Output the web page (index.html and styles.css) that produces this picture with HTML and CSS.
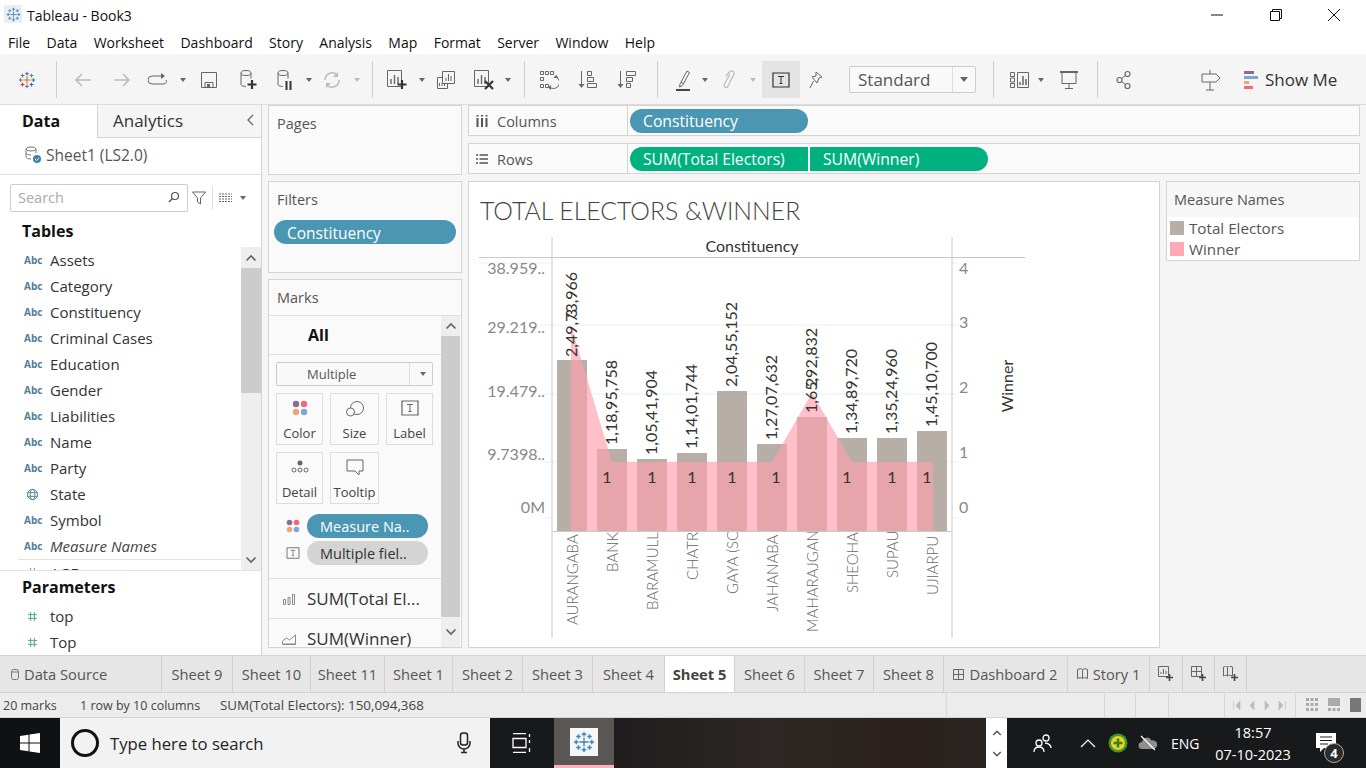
FILE: index.html
```html
<!DOCTYPE html>
<html lang="en">
<head>
    <meta charset="UTF-8">
    <meta name="viewport" content="width=device-width, initial-scale=1.0">
    <title>Tableau - Book3</title>
    <link rel="stylesheet" href="styles.css">
</head>
<body>
    <!-- shared icons -->
    <svg class="sprite" aria-hidden="true">
        <symbol id="i-logo" viewBox="0 0 24 24">
            <path d="M12 7v10M7 12h10M12 1v5M9.500 3.500h5M12 18v5M9.500 20.500h5M1 12h5M3.500 9.500v5M18 12h5M20.500 9.500v5M6 3.500v5M3.500 6h5M18 3.500v5M15.500 6h5M6 15.500v5M3.500 18h5M18 15.500v5M15.500 18h5" fill="none" stroke="currentColor" stroke-width="1.500"/>
        </symbol>
        <symbol id="i-dots" viewBox="0 0 16 16">
            <circle cx="4" cy="4" r="3.200" fill="#8a6d95"/>
            <circle cx="12" cy="4" r="3.200" fill="#ee6a7a"/>
            <circle cx="4" cy="12" r="3.200" fill="#f0a673"/>
            <circle cx="12" cy="12" r="3.200" fill="#7ea6d2"/>
        </symbol>
        <symbol id="i-t" viewBox="0 0 18 16">
            <path d="M1 1h16v14H1z" fill="none" stroke="currentColor" stroke-width="1.200"/>
            <path d="M6 4.500h6M9 4.500v7M7.500 11.500h3" fill="none" stroke="currentColor"/>
        </symbol>
        <symbol id="i-globe" viewBox="0 0 14 14">
            <circle cx="7" cy="7" r="5.500" fill="none" stroke="currentColor"/>
            <ellipse cx="7" cy="7" rx="2.500" ry="5.500" fill="none" stroke="currentColor"/>
            <path d="M1.500 5h11M1.500 9h11" fill="none" stroke="currentColor"/>
        </symbol>
        <symbol id="i-hash" viewBox="0 0 12 12">
            <path d="M4 1v10M8 1v10M1 4h10M1 8h10" fill="none" stroke="currentColor"/>
        </symbol>
        <symbol id="i-up" viewBox="0 0 12 8"><path d="M1.500 6.500L6 2l4.500 4.500" fill="none" stroke="currentColor" stroke-width="1.700"/></symbol>
        <symbol id="i-down" viewBox="0 0 12 8"><path d="M1.500 1.500L6 6l4.500-4.500" fill="none" stroke="currentColor" stroke-width="1.700"/></symbol>
    </svg>

    <header class="title-bar">
        <span class="app-icon"><svg width="15" height="15"><use href="#i-logo"/></svg></span>
        <span class="app-name">Tableau - Book3</span>
        <div class="win-controls">
            <svg width="14" height="14" viewBox="0 0 14 14"><path d="M1 7h12" stroke="#111" fill="none"/></svg>
            <svg width="14" height="14" viewBox="0 0 14 14"><path d="M1.500 3.500h9v9h-9zM3.500 3.500v-2h9v9h-2" stroke="#111" fill="none"/></svg>
            <svg width="14" height="14" viewBox="0 0 14 14"><path d="M1 1l12 12M13 1L1 13" stroke="#111" fill="none"/></svg>
        </div>
    </header>

    <nav class="menu-bar">
        <span>File</span><span>Data</span><span>Worksheet</span><span>Dashboard</span><span>Story</span><span>Analysis</span><span>Map</span><span>Format</span><span>Server</span><span>Window</span><span>Help</span>
    </nav>

    <div class="toolbar">
        <div class="tool"><svg width="18" height="18" viewBox="0 0 24 24" fill="none" stroke-width="1.600"><path d="M12 1v5M9.500 3.500h5M3.500 9.500v5M1 12h5M6 3.500v5M3.500 6h5" stroke="#5d7fa3"/><path d="M12 7v10M7 12h10" stroke="#e2732d"/><path d="M18 3.500v5M15.500 6h5" stroke="#3f9a9a"/><path d="M18 12h5M20.500 9.500v5" stroke="#3f78a8"/><path d="M6 15.500v5M3.500 18h5" stroke="#d8343f"/><path d="M18 15.500v5M15.500 18h5" stroke="#2f6ea5"/><path d="M12 18v5M9.500 20.500h5" stroke="#6d7f9a"/></svg></div>
        <div class="tool-sep"></div>
        <div class="tool off"><svg width="20" height="16" viewBox="0 0 20 16"><path d="M18 8H3M9 2L3 8l6 6" fill="none" stroke="currentColor" stroke-width="1.500"/></svg></div>
        <div class="tool off"><svg width="20" height="16" viewBox="0 0 20 16"><path d="M2 8h15M11 2l6 6-6 6" fill="none" stroke="currentColor" stroke-width="1.500"/></svg></div>
        <div class="tool"><svg width="20" height="14" viewBox="0 0 20 14"><path d="M13 3H4a3 3 0 0 0 0 8h12a2.500 2.500 0 0 0 2-4" fill="none" stroke="currentColor"/><path d="M13 0l4 3-4 3z" fill="currentColor"/></svg></div>
        <div class="tool caret"></div>
        <div class="tool"><svg width="16" height="18" viewBox="0 0 16 18"><path d="M.5 1.500h15v15H.5z" fill="none" stroke="currentColor"/><path d="M4 16.500v-5h8v5z" fill="none" stroke="currentColor"/><path d="M6 13h3v3H6z" fill="currentColor"/></svg></div>
        <div class="tool"><svg width="18" height="22" viewBox="0 0 18 22"><path d="M2 4.500v11a5 2 0 0 0 5 2M12 4.500v5" fill="none" stroke="currentColor"/><ellipse cx="7" cy="4" rx="5" ry="2.500" fill="none" stroke="currentColor"/><path d="M13 11v9M8.500 15.500h9" stroke="#333" stroke-width="2.200"/></svg></div>
        <div class="tool"><svg width="18" height="22" viewBox="0 0 18 22"><path d="M2 4.500v11a5 2 0 0 0 5 2M12 4.500v5" fill="none" stroke="currentColor"/><ellipse cx="7" cy="4" rx="5" ry="2.500" fill="none" stroke="currentColor"/><path d="M10.500 12v9M14.500 12v9" stroke="#333" stroke-width="2"/></svg></div>
        <div class="tool caret"></div>
        <div class="tool off"><svg width="18" height="18" viewBox="0 0 18 18"><path d="M2 9a7 7 0 0 1 12-5M16 9a7 7 0 0 1-12 5" fill="none" stroke="currentColor" stroke-width="1.500"/><path d="M15 1v5h-5zM3 17v-5h5z" fill="currentColor"/></svg></div>
        <div class="tool caret off"></div>
        <div class="tool-sep"></div>
        <div class="tool"><svg width="22" height="22" viewBox="0 0 22 22"><path d="M1.500 1.500h14v16h-14z" fill="none" stroke="currentColor"/><path d="M5 15V10M8.500 15V6M12 15V8" stroke="currentColor" stroke-width="1.400"/><path d="M16 11v9M11.500 15.500h9" stroke="#333" stroke-width="2.200"/></svg></div>
        <div class="tool caret"></div>
        <div class="tool"><svg width="20" height="20" viewBox="0 0 20 20"><path d="M6.500 1.500h12v12h-12zM6.500 7.500h-5v11h10v-5" fill="none" stroke="currentColor"/><path d="M10 11V8M12.500 11V4M15 11V6M3.500 16v-3M6 16v-3M8.500 16v-3" stroke="currentColor"/></svg></div>
        <div class="tool"><svg width="22" height="22" viewBox="0 0 22 22"><path d="M1.500 1.500h14v16h-14z" fill="none" stroke="currentColor"/><path d="M5 15V10M8.500 15V6M12 15V8" stroke="currentColor" stroke-width="1.400"/><path d="M12 12l8 8M20 12l-8 8" stroke="#333" stroke-width="2.200"/></svg></div>
        <div class="tool caret"></div>
        <div class="tool-sep"></div>
        <div class="tool"><svg width="20" height="20" viewBox="0 0 20 20"><path d="M1.500 1.500h3v3h-3zM6.500 1.500h3v3h-3zM11.500 1.500h3v3h-3zM1.500 7.500h3v3h-3zM1.500 14.500h3v3h-3zM6.500 14.500h3v3h-3z" fill="none" stroke="currentColor"/><path d="M17 7a6 6 0 0 1-5 11" fill="none" stroke="currentColor"/><path d="M12 15v5l-3-2.500zM17 5l2.500 3h-5z" fill="currentColor"/></svg></div>
        <div class="tool"><svg width="20" height="20" viewBox="0 0 20 20"><path d="M3.500 1v15" stroke="currentColor"/><path d="M.5 14l3 4 3-4z" fill="currentColor"/><path d="M9.500 1.500h4v4h-4zM9.500 7.500h6v4h-6zM9.500 13.500h9v4h-9z" fill="none" stroke="currentColor"/></svg></div>
        <div class="tool"><svg width="20" height="20" viewBox="0 0 20 20"><path d="M3.500 1v15" stroke="currentColor"/><path d="M.5 14l3 4 3-4z" fill="currentColor"/><path d="M9.500 1.500h9v4h-9zM9.500 7.500h6v4h-6zM9.500 13.500h4v4h-4z" fill="none" stroke="currentColor"/></svg></div>
        <div class="tool-sep"></div>
        <div class="tool"><svg width="16" height="22" viewBox="0 0 16 22"><path d="M5 15L12 2l2.500 1.500L7.500 16.500 4.500 18zM6 13l3 2" fill="none" stroke="currentColor"/><path d="M1 21h14" stroke="#444" stroke-width="2"/></svg></div>
        <div class="tool caret"></div>
        <div class="tool off"><svg width="14" height="22" viewBox="0 0 14 22"><path d="M4 7L8 2.500a2.500 2.500 0 0 1 4 2.500L6 17a2 2 0 0 1-4-1L8 5" fill="none" stroke="currentColor" stroke-width="1.200"/></svg></div>
        <div class="tool caret off"></div>
        <div class="tool active"><svg width="18" height="16"><use href="#i-t"/></svg></div>
        <div class="tool"><svg width="16" height="20" viewBox="0 0 16 20"><path d="M7 2l6 5-3 1-2 5-5-6 4-1zM4.500 11L1 18" fill="none" stroke="currentColor"/></svg></div>
        <div class="fit-select"><span>Standard</span><i class="fit-divider"></i><i class="caret"></i></div>
        <div class="tool-sep"></div>
        <div class="tool"><svg width="20" height="18" viewBox="0 0 20 18"><path d="M.5 1.500h4v4h-4zM.5 7h4v4h-4zM.5 12.500h4v4h-4zM7.500 1.500h11v15h-11z" fill="none" stroke="currentColor"/><path d="M10 14v-3M13 14V5M16 14V8" stroke="currentColor" stroke-width="1.500"/></svg></div>
        <div class="tool caret"></div>
        <div class="tool"><svg width="18" height="20" viewBox="0 0 18 20"><path d="M0 2h18" stroke="currentColor" stroke-width="2"/><path d="M2 2.500v11h14v-11M9 13.500v5M5 18.500h8" fill="none" stroke="currentColor"/></svg></div>
        <div class="tool-sep"></div>
        <div class="tool"><svg width="16" height="20" viewBox="0 0 16 20"><circle cx="11.500" cy="4" r="2.500" fill="none" stroke="currentColor" stroke-width="1.200"/><circle cx="3.500" cy="10" r="2.500" fill="none" stroke="currentColor" stroke-width="1.200"/><circle cx="11.500" cy="16" r="2.500" fill="none" stroke="currentColor" stroke-width="1.200"/><path d="M5.500 8.500l4-3M5.500 11.500l4 3" stroke="currentColor"/></svg></div>
        <div class="tool sign"><svg width="20" height="22" viewBox="0 0 20 22"><path d="M1 5h14l4 4-4 4H1zM9 1v4M9 13v8M5 21h8" fill="none" stroke="currentColor"/></svg></div>
        <div class="show-me">
            <svg width="14" height="20" viewBox="0 0 14 20"><path d="M0 1h10v3H0z" fill="#8a6d95"/><path d="M0 6h14v3H0z" fill="#7ea6d2"/><path d="M0 11h5v3H0z" fill="#f0a673"/><path d="M0 16h9v3H0z" fill="#ee6a7a"/></svg>
            <span>Show Me</span>
        </div>
    </div>

    <main class="workspace">
        <!-- data pane -->
        <aside class="data-pane">
            <div class="pane-tabs">
                <div class="pane-tab current">Data</div>
                <div class="pane-tab">Analytics<svg class="collapse" width="8" height="12" viewBox="0 0 8 12"><path d="M7 1L2 6l5 5" fill="none" stroke="#666" stroke-width="1.300"/></svg></div>
            </div>
            <div class="source-row">
                <svg width="18" height="18" viewBox="0 0 18 18"><ellipse cx="7" cy="3" rx="5" ry="2" fill="none" stroke="#777"/><path d="M2 3v8c0 1 2 2 5 2M12 3v4M2 7c0 1 2 2 5 2" fill="none" stroke="#777"/><circle cx="13" cy="13" r="4" fill="#3f85a8"/><path d="M11 13l1.500 1.500L15 12" fill="none" stroke="#fff"/></svg>
                <span>Sheet1 (LS2.0)</span>
            </div>
            <div class="search-row">
                <div class="search-box">
                    <span>Search</span>
                    <svg width="12" height="12" viewBox="0 0 12 12"><circle cx="7" cy="5" r="3.500" fill="none" stroke="#555" stroke-width="1.200"/><path d="M4.500 7.500L1 11" stroke="#555" stroke-width="1.400"/></svg>
                </div>
                <svg class="funnel" width="14" height="14" viewBox="0 0 14 14"><path d="M.5 1h13L8.500 7v6l-3-2V7z" fill="none" stroke="#666"/></svg>
                <i class="v-line"></i>
                <svg class="list-view" width="13" height="10" viewBox="0 0 13 10"><path d="M0 1h13M0 3.500h13M0 6h13M0 8.500h13" stroke="#666" stroke-dasharray="2 1"/></svg>
                <i class="caret"></i>
            </div>
            <h2 class="group-title">Tables</h2>
            <div class="fields-wrap">
                <ul class="fields">
                    <li><b>Abc</b>Assets</li>
                    <li><b>Abc</b>Category</li>
                    <li><b>Abc</b>Constituency</li>
                    <li><b>Abc</b>Criminal Cases</li>
                    <li><b>Abc</b>Education</li>
                    <li><b>Abc</b>Gender</li>
                    <li><b>Abc</b>Liabilities</li>
                    <li><b>Abc</b>Name</li>
                    <li><b>Abc</b>Party</li>
                    <li><b class="glyph"><svg width="13" height="13"><use href="#i-globe"/></svg></b>State</li>
                    <li><b>Abc</b>Symbol</li>
                    <li class="calc"><b>Abc</b><em>Measure Names</em></li>
                    <li class="measure"><b class="glyph green"><svg width="11" height="11"><use href="#i-hash"/></svg></b>AGE</li>
                </ul>
                <div class="scroll">
                    <div class="scroll-btn"><svg width="12" height="8"><use href="#i-up"/></svg></div>
                    <div class="scroll-track"><div class="scroll-thumb data-thumb"></div></div>
                    <div class="scroll-btn"><svg width="12" height="8"><use href="#i-down"/></svg></div>
                </div>
            </div>
            <div class="params">
                <h2 class="group-title">Parameters</h2>
                <ul class="fields">
                    <li><b class="glyph green"><svg width="11" height="11"><use href="#i-hash"/></svg></b>top</li>
                    <li><b class="glyph green"><svg width="11" height="11"><use href="#i-hash"/></svg></b>Top</li>
                </ul>
            </div>
        </aside>

        <!-- pages, filters, marks -->
        <section class="cards-col">
            <div class="card pages-card"><div class="card-title">Pages</div></div>
            <div class="card filters-card">
                <div class="card-title">Filters</div>
                <div class="pill blue filter-pill">Constituency</div>
            </div>
            <div class="card marks-card">
                <div class="card-title marks-title">Marks</div>
                <div class="marks-wrap">
                    <div class="marks-body">
                        <div class="marks-all">All</div>
                        <div class="marks-main">
                            <div class="mark-select"><span>Multiple</span><i class="caret"></i></div>
                            <div class="mark-grid">
                                <div class="mark-btn"><svg width="16" height="16"><use href="#i-dots"/></svg><span>Color</span></div>
                                <div class="mark-btn"><svg width="20" height="18" viewBox="0 0 20 18"><circle cx="12" cy="8" r="6.500" fill="none" stroke="#666"/><circle cx="5.500" cy="12" r="4" fill="#fafafa" stroke="#666"/></svg><span>Size</span></div>
                                <div class="mark-btn"><svg class="t-icon" width="18" height="16"><use href="#i-t"/></svg><span>Label</span></div>
                                <div class="mark-btn"><svg width="20" height="16" viewBox="0 0 20 16"><circle cx="10" cy="4" r="2.500" fill="#666"/><circle cx="4" cy="11" r="2" fill="none" stroke="#666"/><circle cx="10" cy="11" r="2" fill="none" stroke="#666"/><circle cx="16" cy="11" r="2" fill="none" stroke="#666"/></svg><span>Detail</span></div>
                                <div class="mark-btn"><svg width="18" height="17" viewBox="0 0 18 17"><path d="M1 1h16v11h-4v4l-4-4H1z" fill="none" stroke="#666"/></svg><span>Tooltip</span></div>
                            </div>
                            <div class="mark-pill"><svg width="14" height="14"><use href="#i-dots"/></svg><div class="pill blue">Measure Na..</div></div>
                            <div class="mark-pill"><svg class="t-icon" width="14" height="12"><use href="#i-t"/></svg><div class="pill grey">Multiple fiel..</div></div>
                        </div>
                        <div class="marks-row"><svg width="14" height="12" viewBox="0 0 14 12"><path d="M1.500 6.500h2v5h-2zM6 4.500h2v7H6zM10.500 1.500h2v10h-2z" fill="none" stroke="#888"/></svg>SUM(Total El...</div>
                        <div class="marks-row"><svg width="14" height="12" viewBox="0 0 14 12"><path d="M.5 11.500h13M.5 11V8l4-3 3 2 6-5v9z" fill="none" stroke="#888"/></svg>SUM(Winner)</div>
                    </div>
                    <div class="scroll">
                        <div class="scroll-btn"><svg width="12" height="8"><use href="#i-up"/></svg></div>
                        <div class="scroll-track"><div class="scroll-thumb marks-thumb"></div></div>
                        <div class="scroll-btn tall"><svg width="12" height="8"><use href="#i-down"/></svg></div>
                    </div>
                </div>
            </div>
        </section>

        <!-- shelves and view -->
        <section class="view-col">
            <div class="shelf">
                <div class="shelf-label"><svg width="12" height="12" viewBox="0 0 12 12"><path d="M1.500 3v9M6 3v9M10.500 3v9" stroke="#555" stroke-width="2"/><path d="M1.500 0v1.500M6 0v1.500M10.500 0v1.500" stroke="#555" stroke-width="2"/></svg>Columns</div>
                <div class="shelf-pills"><div class="pill blue shelf-pill">Constituency</div></div>
            </div>
            <div class="shelf">
                <div class="shelf-label"><svg width="12" height="12" viewBox="0 0 12 12"><path d="M0 2h2M3.500 2H12M0 6h2M3.500 6H12M0 10h2M3.500 10H12" stroke="#555" stroke-width="1.500"/></svg>Rows</div>
                <div class="shelf-pills">
                    <div class="pill green shelf-pill left">SUM(Total Electors)</div>
                    <div class="pill green shelf-pill right">SUM(Winner)</div>
                </div>
            </div>
            <div class="view-row">
                <div class="viz-card">
                    <h1 class="viz-title">TOTAL ELECTORS &amp;WINNER</h1>
                    <svg class="chart" width="690" height="416" viewBox="469 232 690 416">
                        <defs><clipPath id="xclip"><rect x="552" y="532" width="400" height="110"/></clipPath></defs>
                        <g class="grid">
                            <path d="M479 263h73M552 325h400M552 394h400M552 462h400M952 263h6M952 325h6M952 394h6M952 462h6M545 518h7M952 518h6M540 325h12M540 394h12M540 462h12"/>
                        </g>
                        <path class="rule" d="M552 237v401M952 237v401M479 257.500h546M552 531.500h400"/>
                        <g class="bars">
                            <rect x="557" y="360" width="30" height="171"/>
                            <rect x="597" y="449" width="30" height="82"/>
                            <rect x="637" y="459" width="30" height="72"/>
                            <rect x="677" y="453" width="30" height="78"/>
                            <rect x="717" y="391" width="30" height="140"/>
                            <rect x="757" y="444" width="30" height="87"/>
                            <rect x="797" y="417" width="30" height="114"/>
                            <rect x="837" y="438" width="30" height="93"/>
                            <rect x="877" y="438" width="30" height="93"/>
                            <rect x="917" y="431" width="30" height="100"/>
                        </g>
                        <path class="area" d="M571 531V325L612 462H772L812 393L852 462H933V531Z"/>
                        <g class="value-labels">
                            <text transform="translate(577 357) rotate(-90)">2,49,73,966</text>
                            <text transform="translate(617 445) rotate(-90)">1,18,95,758</text>
                            <text transform="translate(657 455) rotate(-90)">1,05,41,904</text>
                            <text transform="translate(697 449) rotate(-90)">1,14,01,744</text>
                            <text transform="translate(737 387) rotate(-90)">2,04,55,152</text>
                            <text transform="translate(777 440) rotate(-90)">1,27,07,632</text>
                            <text transform="translate(817 413) rotate(-90)">1,65,92,832</text>
                            <text transform="translate(857 434) rotate(-90)">1,34,89,720</text>
                            <text transform="translate(897 434) rotate(-90)">1,35,24,960</text>
                            <text transform="translate(937 427) rotate(-90)">1,45,10,700</text>
                            <text transform="translate(577 318) rotate(-90)">3</text>
                            <text transform="translate(817 387) rotate(-90)">2</text>
                        </g>
                        <g class="winner-labels">
                            <text x="607" y="483">1</text>
                            <text x="652" y="483">1</text>
                            <text x="692" y="483">1</text>
                            <text x="732" y="483">1</text>
                            <text x="776" y="483">1</text>
                            <text x="847" y="483">1</text>
                            <text x="892" y="483">1</text>
                            <text x="927" y="483">1</text>
                        </g>
                        <g class="x-labels" clip-path="url(#xclip)">
                            <text transform="translate(578 625) rotate(-90)">AURANGABA</text>
                            <text transform="translate(618 572) rotate(-90)">BANK</text>
                            <text transform="translate(658 610) rotate(-90)">BARAMULL</text>
                            <text transform="translate(698 580) rotate(-90)">CHATR</text>
                            <text transform="translate(738 594) rotate(-90)">GAYA (SC</text>
                            <text transform="translate(778 612) rotate(-90)">JAHANABA</text>
                            <text transform="translate(818 632) rotate(-90)">MAHARAJGAN</text>
                            <text transform="translate(858 593) rotate(-90)">SHEOHA</text>
                            <text transform="translate(898 578) rotate(-90)">SUPAU</text>
                            <text transform="translate(938 595) rotate(-90)">UJIARPU</text>
                        </g>
                        <g class="axis-left">
                            <text x="545" y="274">38.959..</text>
                            <text x="545" y="333">29.219..</text>
                            <text x="545" y="397">19.479..</text>
                            <text x="545" y="460">9.7398..</text>
                            <text x="545" y="513">0M</text>
                        </g>
                        <g class="axis-right">
                            <text x="959" y="274">4</text>
                            <text x="959" y="328">3</text>
                            <text x="959" y="393">2</text>
                            <text x="959" y="458">1</text>
                            <text x="959" y="513">0</text>
                        </g>
                        <text class="axis-title" x="752" y="252">Constituency</text>
                        <text class="axis-title" transform="translate(1013 386) rotate(-90)">Winner</text>
                    </svg>
                </div>
                <aside class="legend">
                    <div class="legend-head">Measure Names</div>
                    <div class="legend-row"><i class="swatch taupe"></i>Total Electors</div>
                    <div class="legend-row"><i class="swatch pink"></i>Winner</div>
                </aside>
            </div>
        </section>
    </main>

    <div class="sheet-tabs">
        <div class="tab"><svg width="8" height="11" viewBox="0 0 8 11"><rect x=".5" y=".5" width="7" height="10" rx="2" fill="none" stroke="#777"/><path d="M.5 3h7" stroke="#777"/></svg>Data Source</div>
        <div class="tab">Sheet 9</div>
        <div class="tab">Sheet 10</div>
        <div class="tab">Sheet 11</div>
        <div class="tab">Sheet 1</div>
        <div class="tab">Sheet 2</div>
        <div class="tab">Sheet 3</div>
        <div class="tab">Sheet 4</div>
        <div class="tab current">Sheet 5</div>
        <div class="tab">Sheet 6</div>
        <div class="tab">Sheet 7</div>
        <div class="tab">Sheet 8</div>
        <div class="tab"><svg width="11" height="11" viewBox="0 0 11 11"><path d="M.5.500h10v10H.5zM5.500.500v10M.5 5.500h10" fill="none" stroke="#666"/></svg>Dashboard 2</div>
        <div class="tab"><svg width="11" height="12" viewBox="0 0 11 12"><path d="M.5 1.500c2-1 4-1 5 0 1-1 3-1 5 0v9c-2-1-4-1-5 0-1-1-3-1-5 0zM5.500 1.500v9" fill="none" stroke="#666"/></svg>Story 1</div>
        <div class="tab"><svg width="16" height="16" viewBox="0 0 16 16"><path d="M.5.500h10v10H.5z" fill="none" stroke="#666"/><path d="M3 8V6M5.500 8V3M8 8V5" stroke="#666"/><path d="M11.500 8v7M8 11.500h7" stroke="#444" stroke-width="1.600"/></svg></div>
        <div class="tab"><svg width="16" height="16" viewBox="0 0 16 16"><path d="M.5.500h10v10H.5zM5.500.500v10M.5 5.500h10" fill="none" stroke="#666"/><path d="M11.500 8v7M8 11.500h7" stroke="#444" stroke-width="1.600"/></svg></div>
        <div class="tab"><svg width="16" height="16" viewBox="0 0 16 16"><path d="M.5 1c1.500-1 3-1 4 0 1-1 3-1 5 0v9c-2-1-4-1-5 0-1-1-2.500-1-4 0zM4.500 1v9" fill="none" stroke="#666"/><path d="M11.500 8v7M8 11.500h7" stroke="#444" stroke-width="1.600"/></svg></div>
    </div>

    <footer class="status-bar">
        <span class="status-cell first">20 marks</span>
        <span class="status-cell second">1 row by 10 columns</span>
        <span class="status-cell third">SUM(Total Electors): 150,094,368</span>
        <span class="status-cell"></span>
        <span class="status-cell"></span>
        <span class="status-cell"></span>
        <span class="status-cell"></span>
        <span class="status-cell pager">
            <svg width="54" height="9" viewBox="0 0 54 9"><path d="M.5 0v9M7 0L3 4.500 7 9zM21 0l-4 4.500L21 9zM32 0l4 4.500L32 9zM46 0l4 4.500L46 9zM52.500 0v9" fill="#bbb" stroke="#bbb" stroke-width=".6"/></svg>
        </span>
        <span class="status-cell views">
            <svg width="12" height="14" viewBox="0 0 12 14"><path d="M0 0h3v3H0zM4.500 0h3v3h-3zM9 0h3v3H9zM0 5h3v3H0zM4.500 5h3v3h-3zM9 5h3v3H9zM0 10h3v3H0zM4.500 10h3v3h-3zM9 10h3v3H9z" fill="#aaa"/></svg>
            <svg width="12" height="14" viewBox="0 0 12 14"><path d="M0 0h12v8H0zM0 10h3v3H0zM4.500 10h3v3h-3zM9 10h3v3H9z" fill="#aaa"/></svg>
            <svg width="11" height="14" viewBox="0 0 11 14"><path d="M0 0h11v14H0z" fill="#777"/></svg>
        </span>
    </footer>

    <div class="taskbar">
        <div class="start"><svg width="20" height="20" viewBox="0 0 20 20"><path d="M0 3l8.500-1.200v7.700H0zM9.500 1.600L20 0v9.500H9.500zM0 10.500h8.500v7.700L0 17zM9.500 10.500H20V20L9.500 18.400z" fill="#fff"/></svg></div>
        <div class="task-search">
            <i class="cortana"></i>
            <span>Type here to search</span>
            <svg class="mic" width="14" height="22" viewBox="0 0 14 22"><rect x="3.500" y="1" width="7" height="12" rx="2.500" fill="none" stroke="#222" stroke-width="1.500"/><path d="M1 9v2a6 6 0 0 0 12 0V9M7 17v3M4 20.500h6" fill="none" stroke="#222" stroke-width="1.500"/></svg>
        </div>
        <div class="task-view"><svg width="20" height="20" viewBox="0 0 20 20"><path d="M1 .5h13M1 19.500h13M1 5.500h13v9H1zM17.500 1v3M17.500 7v3M17.500 15v4" fill="none" stroke="#fff" stroke-width="1.300"/></svg></div>
        <div class="task-app"><span class="task-app-icon"><svg width="22" height="22"><use href="#i-logo"/></svg></span></div>
        <div class="task-wallpaper"></div>
        <div class="task-scroll">
            <svg width="10" height="8"><use href="#i-up"/></svg>
            <svg width="10" height="8"><use href="#i-down"/></svg>
        </div>
        <div class="tray">
            <svg class="people" width="20" height="20" viewBox="0 0 20 20"><circle cx="13" cy="5" r="3" fill="none" stroke="#fff" stroke-width="1.300"/><circle cx="6" cy="10" r="3" fill="none" stroke="#fff" stroke-width="1.300"/><path d="M1 19c0-3 2-5 5-5s5 2 5 5M12 10c3 0 6 2 6 5" fill="none" stroke="#fff" stroke-width="1.300"/></svg>
            <svg class="tray-up" width="16" height="10" viewBox="0 0 16 10"><path d="M1 9l7-7 7 7" fill="none" stroke="#fff" stroke-width="1.200"/></svg>
            <svg class="tray-green" width="20" height="20" viewBox="0 0 20 20"><circle cx="10" cy="10" r="9.500" fill="#3b9a2c"/><circle cx="10" cy="10" r="7" fill="#f4cf1f"/><path d="M10 5.500v9M5.500 10h9" stroke="#2c8a25" stroke-width="2.600"/></svg>
            <svg class="tray-cloud" width="20" height="16" viewBox="0 0 20 16"><path d="M4 14a3.500 3.500 0 0 1 0-7 5 5 0 0 1 9.500-1.500A4 4 0 0 1 16 14z" fill="#8e8e8e"/><path d="M3 1l14 14" stroke="#fff" stroke-width="1.200"/></svg>
            <span class="lang">ENG</span>
            <div class="clock"><span>18:57</span><span>07-10-2023</span></div>
            <div class="notify">
                <svg width="22" height="20" viewBox="0 0 22 20"><path d="M1 0h20v15H9l-4 4v-4H1z" fill="#fff"/><path d="M5 4h12M5 7.500h12M5 11h8" stroke="#222" stroke-width="1.200"/></svg>
                <span class="badge">4</span>
            </div>
        </div>
    </div>
</body>
</html>
```

FILE: styles.css
```css
* {
    box-sizing: border-box;
}
html, body {
    margin: 0;
    padding: 0;
}
body {
    width: 1366px;
    height: 768px;
    overflow: hidden;
    font-family: "Open Sans", "Liberation Sans", sans-serif;
    font-size: 14.500px;
    color: #333;
    background-color: #f5f5f5;
}
.sprite {
    display: none;
}
ul {
    list-style: none;
    margin: 0;
    padding: 0;
}
h1, h2 {
    margin: 0;
}
svg {
    display: block;
    flex: none;
}
.caret {
    display: block;
    width: 0;
    height: 0;
    border-left: 4px solid transparent;
    border-right: 4px solid transparent;
    border-top: 5px solid #666;
}

/* title and menu */
.title-bar {
    height: 30px;
    background-color: #fff;
    display: flex;
    align-items: center;
    padding-left: 4px;
    font-size: 14px;
    color: #111;
}
.app-icon {
    width: 18px;
    height: 18px;
    margin-top: -2px;
    background-color: #e9eef2;
    color: #4b8dbd;
    display: flex;
    align-items: center;
    justify-content: center;
    margin-right: 5px;
}
.win-controls {
    margin-left: auto;
    display: flex;
    gap: 44.500px;
    padding-right: 25px;
}
.menu-bar {
    height: 24px;
    background-color: #fff;
    display: flex;
    align-items: center;
    gap: 16.400px;
    padding-left: 8px;
    font-size: 14px;
    color: #111;
}

/* toolbar */
.toolbar {
    height: 51px;
    padding: 7px 0 7px 8px;
    display: grid;
    grid-template-columns: 38px 20px 34px 44px 28px 22px 30px 48px 26px 22px 24px 26px 4px 46px 4px 44px 32px 16px 16px 34px 44px 34px 26px 26px 18px 30px 18px 38px 34px 142px 34px 20px 22px 34px 22px 32px 86px auto;
    align-items: stretch;
    justify-items: center;
    border-bottom: 1px solid #dcdcdc;
}
.tool {
    display: flex;
    align-items: center;
    justify-content: center;
    color: #666;
    min-width: 0;
}
.tool.caret {
    width: 8px;
    height: 37px;
    border: none;
}
.tool.caret::after {
    content: "";
    border-left: 3px solid transparent;
    border-right: 3px solid transparent;
    border-top: 4px solid #666;
}
.tool.off {
    color: #bbb;
}
.tool.caret.off::after {
    border-top-color: #bbb;
}
.tool.active {
    width: 100%;
    background-color: #e4e4e4;
    color: #333;
}
.tool-sep {
    width: 1px;
    background-color: #cfcfcf;
}
.tool.sign {
    justify-self: end;
    width: 30px;
}
.fit-select {
    justify-self: end;
    width: 127px;
    height: 27px;
    align-self: center;
    background-color: #f9f9f9;
    border: 1px solid #ccc;
    border-radius: 2px;
    display: flex;
    align-items: center;
    padding: 0 7px 0 8px;
    font-size: 17px;
    color: #555;
}
.fit-divider {
    width: 1px;
    height: 25px;
    background-color: #ddd;
    margin-left: auto;
    margin-right: 7px;
}
.show-me {
    justify-self: start;
    margin-left: 18px;
    display: flex;
    align-items: center;
    gap: 7px;
    font-size: 17px;
    color: #333;
}

/* main area */
.workspace {
    height: 550px;
    display: grid;
    grid-template-columns: 262px 194px 892px;
    gap: 6px;
}
.data-pane {
    background-color: #fff;
    border-right: 1px solid #d4d4d4;
    border-bottom: 1px solid #d4d4d4;
    display: flex;
    flex-direction: column;
}
.pane-tabs {
    height: 33px;
    display: grid;
    grid-template-columns: 97px 1fr;
}
.pane-tab {
    position: relative;
    background-color: #f5f5f5;
    border-left: 1px solid #d4d4d4;
    border-bottom: 1px solid #d4d4d4;
    padding: 4px 0 0 15px;
    font-size: 17px;
    color: #333;
}
.pane-tab.current {
    background-color: #fff;
    border: none;
    padding: 5px 0 0 22px;
    font-weight: 700;
    font-size: 16px;
    color: #111;
}
.collapse {
    position: absolute;
    right: 7px;
    top: 9px;
}
.source-row {
    height: 37px;
    padding: 0 0 2px 24px;
    border-bottom: 1px solid #e0e0e0;
    display: flex;
    align-items: center;
    gap: 4px;
    font-size: 15.500px;
    color: #555;
}
.search-row {
    height: 46px;
    padding: 0 0 0 10px;
    display: flex;
    align-items: center;
}
.search-box {
    width: 178px;
    height: 28px;
    border: 1px solid #ccc;
    border-radius: 2px;
    display: flex;
    align-items: center;
    justify-content: space-between;
    padding: 0 7px 2px;
    color: #aaa;
}
.funnel {
    margin-left: 4px;
}
.v-line {
    width: 1px;
    height: 22px;
    background-color: #ddd;
    margin: 0 6px;
}
.list-view {
    margin-right: 8px;
}
.search-row .caret {
    border-left-width: 3.500px;
    border-right-width: 3.500px;
    border-top-width: 4px;
}
.group-title {
    height: 26px;
    padding: 0 0 0 22px;
    font-size: 16px;
    font-weight: 700;
    color: #111;
    line-height: 20px;
}
.fields-wrap {
    height: 324px;
    display: flex;
    border-bottom: 1px solid #e2e2e2;
}
.fields-wrap .fields {
    flex: 1;
    overflow: hidden;
}
.fields li {
    height: 26px;
    display: flex;
    align-items: center;
    padding-left: 24px;
    font-size: 15px;
    color: #333;
}
.fields b {
    width: 26px;
    flex: none;
    font-size: 10px;
    font-weight: 700;
    color: #4f7f95;
}
.fields em {
    color: #444;
}
.fields .glyph {
    padding-left: 2px;
}
.fields .green {
    color: #3fa07f;
    padding-left: 3px;
}
.fields .measure {
    border-top: 1px solid #e2e2e2;
    margin-left: 18px;
    padding-left: 6px;
}
.params {
    padding-top: 6px;
}
.params .group-title {
    height: 22px;
    margin-bottom: 4px;
}
.scroll {
    width: 20px;
    flex: none;
    background-color: #eee;
    display: flex;
    flex-direction: column;
    color: #666;
}
.scroll-btn {
    height: 21px;
    display: flex;
    align-items: center;
    justify-content: center;
}
.scroll-btn.tall {
    height: 31px;
}
.scroll-track {
    flex: 1;
}
.scroll-thumb {
    background-color: #ccc;
}
.data-thumb {
    height: 125px;
}
.marks-thumb {
    height: 281px;
}

/* cards */
.cards-col {
    display: flex;
    flex-direction: column;
    gap: 6px;
}
.card {
    background-color: #fafafa;
    border: 1px solid #d4d4d4;
}
.card-title {
    padding: 8px 0 0 8px;
    color: #555;
}
.pages-card {
    height: 70px;
}
.filters-card {
    height: 92px;
}
.marks-card {
    height: 369px;
    display: flex;
    flex-direction: column;
}
.marks-title {
    height: 36px;
    padding-top: 8px;
    border-bottom: 1px solid #e0e0e0;
}
.marks-wrap {
    flex: 1;
    min-height: 0;
    display: flex;
}
.marks-body {
    flex: 1;
    min-width: 0;
    overflow: hidden;
}
.marks-wrap .scroll {
    width: 19px;
    margin-right: 1px;
}
.marks-all {
    height: 39px;
    border-bottom: 1px solid #e0e0e0;
    padding: 0 0 0 39px;
    display: flex;
    align-items: center;
    font-size: 16px;
    font-weight: 700;
    color: #111;
}
.marks-main {
    height: 224px;
    padding: 7px 0 0 7px;
    border-bottom: 1px solid #e0e0e0;
}
.mark-select {
    width: 157px;
    height: 24px;
    border: 1px solid #ccc;
    border-radius: 2px;
    background-color: #f9f9f9;
    display: flex;
    align-items: center;
    padding-left: 30px;
    font-size: 13px;
    color: #555;
    position: relative;
}
.mark-select .caret {
    position: absolute;
    right: 6px;
    border-left-width: 3.500px;
    border-right-width: 3.500px;
    border-top-width: 4px;
}
.mark-select::after {
    content: "";
    position: absolute;
    right: 22px;
    top: 0;
    bottom: 0;
    width: 1px;
    background-color: #ddd;
}
.mark-grid {
    display: grid;
    grid-template-columns: 47px 49px 47px;
    grid-auto-rows: 52px;
    gap: 7px;
    margin-top: 7px;
}
.mark-btn {
    border: 1px solid #ddd;
    display: flex;
    flex-direction: column;
    align-items: center;
    justify-content: space-between;
    padding: 6px 0 2px;
    font-size: 13px;
    color: #444;
}
.t-icon {
    color: #666;
}
.mark-pill {
    display: flex;
    align-items: center;
    margin-top: 3px;
}
.mark-pill svg {
    margin-left: 10px;
    margin-right: 7px;
}
.mark-grid + .mark-pill {
    margin-top: 10px;
}
.mark-pill .pill {
    width: 121px;
    padding-left: 13px;
}
.marks-row {
    height: 40px;
    display: flex;
    align-items: center;
    gap: 11px;
    padding-left: 13px;
    border-bottom: 1px solid #e0e0e0;
    font-size: 17px;
    color: #333;
}
.pill {
    height: 24px;
    border-radius: 12px;
    display: flex;
    align-items: center;
    padding-top: 1px;
    white-space: nowrap;
}
.pill.blue {
    background-color: #4a96b3;
    color: #fff;
}
.pill.green {
    background-color: #00b180;
    color: #fff;
}
.pill.grey {
    background-color: #d4d4d4;
    color: #333;
}
.filter-pill {
    margin: 11px 0 0 5px;
    width: 182px;
    padding-left: 13px;
    font-size: 15.500px;
}

/* shelves */
.view-col {
    display: flex;
    flex-direction: column;
    gap: 7px;
}
.shelf {
    height: 31px;
    background-color: #fafafa;
    border: 1px solid #d4d4d4;
    display: grid;
    grid-template-columns: 159px 1fr;
}
.shelf-label {
    border-right: 1px solid #d4d4d4;
    display: flex;
    align-items: center;
    gap: 9px;
    padding: 1px 0 0 7px;
    color: #555;
}
.shelf-pills {
    display: flex;
    align-items: center;
    gap: 2px;
    padding-left: 2px;
}
.shelf-pill {
    width: 178px;
    padding-left: 13px;
    font-size: 15.700px;
}
.shelf-pill.left {
    border-radius: 12px 0 0 12px;
}
.shelf-pill.right {
    border-radius: 0 12px 12px 0;
}
.view-row {
    display: grid;
    grid-template-columns: 692px 194px;
    gap: 6px;
    align-items: start;
}
.viz-card {
    height: 467px;
    background-color: #fff;
    border: 1px solid #d4d4d4;
}
.viz-title {
    height: 50px;
    padding: 13px 0 0 11px;
    font-family: "Lato", "Liberation Sans", sans-serif;
    font-size: 24.800px;
    font-weight: 300;
    color: #444;
    line-height: 32px;
}

/* chart */
.chart text {
    font-family: "Lato", "Liberation Sans", sans-serif;
}
.grid path {
    stroke: #eeeeee;
    fill: none;
}
.rule {
    stroke: #c8c8c8;
    fill: none;
}
.bars rect {
    fill: #b8aea8;
}
.area {
    fill: #ff9eac;
    fill-opacity: 0.65;
}
.value-labels text {
    font-size: 16px;
    fill: #333;
}
.winner-labels text {
    font-size: 16px;
    fill: #333;
    text-anchor: middle;
}
.x-labels text {
    font-size: 15px;
    font-weight: 300;
    fill: #666;
}
.axis-left text {
    font-size: 16px;
    fill: #888;
    text-anchor: end;
}
.axis-right text {
    font-size: 16px;
    fill: #888;
}
.axis-title {
    font-size: 16px;
    fill: #333;
    text-anchor: middle;
}

/* legend */
.legend {
    height: 80px;
    background-color: #fff;
    border: 1px solid #d4d4d4;
}
.legend-head {
    height: 35px;
    background-color: #f7f7f7;
    padding: 8px 0 0 7px;
    color: #555;
}
.legend-row {
    height: 21px;
    display: flex;
    align-items: center;
    gap: 5px;
    padding-left: 3px;
    font-size: 15.200px;
    color: #555;
}
.swatch {
    width: 14px;
    height: 14px;
}
.swatch.taupe {
    background-color: #b8aea8;
}
.swatch.pink {
    background-color: #ffa9b5;
}

/* sheet tabs and status */
.sheet-tabs {
    height: 38px;
    border-top: 1px solid #d4d4d4;
    border-bottom: 1px solid #d4d4d4;
    background-color: #e6e6e6;
    display: grid;
    grid-template-columns: 162px 71px 78px 74px 68px 70px 70px 72px 70px 70px 69px 70px 124px 82px 33px 32px 32px;
    font-size: 14.700px;
}
.tab {
    border-right: 1px solid #d0d0d0;
    display: flex;
    align-items: center;
    justify-content: center;
    gap: 5px;
    color: #555;
}
.tab:first-child {
    justify-content: flex-start;
    padding-left: 11px;
}
.tab.current {
    background-color: #fff;
    font-weight: 700;
    color: #444;
}
.status-bar {
    height: 25px;
    background-color: #ececec;
    border-bottom: 1px solid #d4d4d4;
    display: grid;
    grid-template-columns: 77px 140px 730px 158px 31px 33px 56px 71px 1fr;
    font-size: 12.500px;
    color: #444;
}
.status-cell {
    display: flex;
    align-items: center;
    padding-left: 3px;
    border-right: 1px solid #d8d8d8;
    white-space: nowrap;
}
.status-cell.first,
.status-cell.second {
    border-right: none;
}
.status-cell.third {
    font-size: 13.400px;
}
.status-cell.pager {
    justify-content: center;
    padding-left: 0;
}
.status-cell.views {
    border-right: none;
    gap: 10px;
    padding-left: 10px;
}

/* windows taskbar */
.taskbar {
    height: 50px;
    background-color: #18191b;
    display: grid;
    grid-template-columns: 60px 430px 64px 60px 372px 21px 1fr;
    color: #fff;
}
.start {
    display: flex;
    align-items: center;
    justify-content: center;
    background-color: #101113;
}
.task-search {
    background-color: #f2f2f2;
    display: flex;
    align-items: center;
    padding-left: 11px;
    color: #222;
    font-size: 16.700px;
}
.cortana {
    width: 28px;
    height: 28px;
    border: 3.500px solid #111;
    border-radius: 50%;
    margin-right: 11px;
}
.mic {
    margin-left: auto;
    margin-right: 19px;
}
.task-view {
    display: flex;
    align-items: center;
    justify-content: center;
}
.task-app {
    background-color: #5a5654;
    border-bottom: 3px solid #ffb0bf;
    display: flex;
    align-items: center;
    justify-content: center;
}
.task-app-icon {
    width: 28px;
    height: 28px;
    background-color: #f4f6f8;
    color: #3f86bb;
    display: flex;
    align-items: center;
    justify-content: center;
}
.task-wallpaper {
    background: linear-gradient(90deg, #1f1d1e, #2c2724 40%, #2b211d 80%, #2a2422);
}
.task-scroll {
    background-color: #fff;
    color: #555;
    display: flex;
    flex-direction: column;
    align-items: center;
    justify-content: space-around;
    padding: 4px 0;
}
.tray {
    display: flex;
    align-items: center;
    padding-left: 26px;
}
.people {
    margin-right: 27px;
}
.tray-up {
    margin-right: 12px;
}
.tray-green {
    margin-right: 10px;
}
.tray-cloud {
    margin-right: 13px;
}
.lang {
    font-size: 14px;
    width: 37px;
}
.clock {
    width: 90px;
    display: flex;
    flex-direction: column;
    align-items: center;
    gap: 3px;
    font-size: 14.500px;
    line-height: 19px;
}
.notify {
    position: relative;
    margin-left: 17px;
}
.badge {
    position: absolute;
    left: 9px;
    top: 10px;
    width: 20px;
    height: 20px;
    border-radius: 50%;
    background-color: #2b2b2b;
    border: 1px solid #aaa;
    display: flex;
    align-items: center;
    justify-content: center;
    font-size: 13px;
    font-weight: 700;
}
```
